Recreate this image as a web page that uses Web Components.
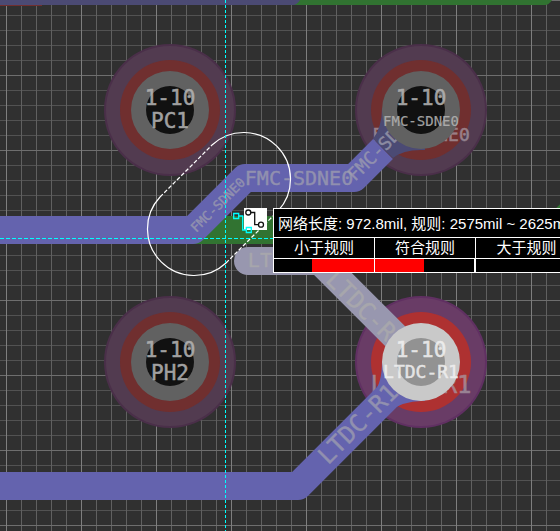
<!DOCTYPE html>
<html lang="zh-CN">
<head>
<meta charset="utf-8">
<title>PCB</title>
<style>
  body {
    margin: 0;
    background: #303030;
  }
</style>
</head>
<body>
<pcb-board>
  <pcb-pad layer="ring" style="--x: 170px; --y: 110px"></pcb-pad>
  <pcb-pad layer="ring" style="--x: 421px; --y: 110px" net="FMC-SDNE0"></pcb-pad>
  <pcb-pad layer="ring" style="--x: 170px; --y: 362px"></pcb-pad>
  <pcb-pad layer="ring" style="--x: 421px; --y: 362px" net="LTDC-R1" active></pcb-pad>
  <pcb-traces></pcb-traces>
  <pcb-pad layer="hole" style="--x: 170px; --y: 110px" number="1-10" name="PC1"></pcb-pad>
  <pcb-pad layer="hole" style="--x: 421px; --y: 110px" number="1-10" name="FMC-SDNE0"></pcb-pad>
  <pcb-pad layer="hole" style="--x: 170px; --y: 362px" number="1-10" name="PH2"></pcb-pad>
  <pcb-pad layer="hole" style="--x: 421px; --y: 362px" number="1-10" name="LTDC-R1" active></pcb-pad>
  <route-cursor></route-cursor>
  <length-tip style="--x: 273px; --y: 208px" low="38" high="50">网络长度: 972.8mil, 规则: 2575mil ~ 2625mil</length-tip>
</pcb-board>

<script>
/**
 * The canvas with its grid. Everything slotted in lies on it.
 */
class PcbBoard extends HTMLElement {
  constructor () {
    super()
    this.attachShadow({ mode: 'open' })
    this.shadowRoot.innerHTML = `
      <style>
        :host {
          display: block;
          position: relative;
          min-height: 100vh;
          overflow: hidden;
          font-family: "DejaVu Sans Mono", monospace;
        }

        .grid {
          position: absolute;
          inset: 0;
          width: 100%;
          height: 100%;
        }
      </style>
      <svg class="grid" aria-hidden="true">
        <defs>
          <pattern id="minor" x="6" y="0" width="15" height="15" patternUnits="userSpaceOnUse">
            <path d="M0 0h15v1H0z" fill="#525252"/>
            <path d="M0 0h1v15H0z" fill="#606060"/>
          </pattern>
          <pattern id="major" x="6" y="0" width="75" height="75" patternUnits="userSpaceOnUse">
            <path d="M0 0h75v1H0z" fill="#6e6e6e"/>
            <path d="M0 0h1v75H0z" fill="#7e7e7e"/>
          </pattern>
        </defs>
        <rect width="100%" height="100%" fill="url(#minor)"/>
        <rect width="100%" height="100%" fill="url(#major)"/>
      </svg>
      <slot></slot>
    `
  }
}
customElements.define('pcb-board', PcbBoard)

/**
 * A round pad. The ring layer lies under the traces, the hole layer over them.
 */
class PcbPad extends HTMLElement {
  constructor () {
    super()
    this.attachShadow({ mode: 'open' })
  }

  /**
   * Draws the layer that the attributes ask for.
   */
  connectedCallback () {
    const ring = this.getAttribute('layer') === 'ring'
    this.shadowRoot.innerHTML = `
      <style>
        :host {
          --edge: #4a2f49;
          --mask: #523b50;
          --copper: #702f2f;
          --plate: #616161;
          --drill: #111;
          --label: #b4b4b4;
          position: absolute;
          left: var(--x);
          top: var(--y);
        }

        :host([active]) {
          --edge: #603062;
          --mask: #693c66;
          --copper: #ae3131;
          --plate: #c9c9c9;
          --drill: #929292;
          --label: #f0f0f0;
        }

        svg {
          display: block;
          width: 132px;
          height: 132px;
          margin: -66px;
          overflow: visible;
        }

        text {
          font-size: 21px;
          text-anchor: middle;
          fill: var(--label);
          stroke: var(--label);
          stroke-width: 0.5;
          opacity: 0.88;
        }

        .small {
          font-size: 14px;
          stroke-width: 0.2;
        }

        .medium {
          font-size: 18px;
        }

        .large {
          font-size: 24px;
        }

        .net {
          fill: #a89aa4;
          stroke: #a89aa4;
          opacity: 0.75;
        }
      </style>
      <svg viewBox="-66 -66 132 132">${ring ? this.ring() : this.hole()}</svg>
    `
  }

  ring () {
    const net = this.getAttribute('net') || ''
    const size = net.length > 7 ? 'medium' : 'large'
    return `
      <circle r="66" fill="var(--edge)"/>
      <circle r="64" fill="var(--mask)"/>
      <circle r="50" fill="var(--copper)"/>
      <text class="net ${size}" y="31">${net}</text>
    `
  }

  hole () {
    const name = this.getAttribute('name')
    const size = name.length > 7 ? 'small' : name.length > 4 ? 'medium' : ''
    return `
      <circle r="39" fill="var(--plate)"/>
      <circle r="24" fill="var(--drill)"/>
      <text y="-5">${this.getAttribute('number')}</text>
      <text class="${size}" y="${size ? 16 : 18}">${name}</text>
    `
  }
}
customElements.define('pcb-pad', PcbPad)

/**
 * Copper traces with their net names.
 */
class PcbTraces extends HTMLElement {
  constructor () {
    super()
    this.attachShadow({ mode: 'open' })
    this.shadowRoot.innerHTML = `
      <style>
        :host {
          position: absolute;
          inset: 0;
        }

        svg {
          display: block;
          width: 100%;
          height: 100%;
        }

        .trace {
          fill: none;
          stroke: #6463ae;
          stroke-width: 28px;
          stroke-linejoin: round;
        }

        .lit {
          stroke: #9897af;
          stroke-linecap: round;
        }

        text {
          font-size: 18px;
          text-anchor: middle;
          dominant-baseline: central;
          fill: #a0a0b0;
          stroke: #a0a0b0;
          stroke-width: 0.4;
          opacity: 0.75;
        }

        .small {
          font-size: 13px;
        }

        .medium {
          font-size: 20px;
        }

        .large {
          font-size: 24px;
        }

        .on-lit {
          fill: #acacac;
          stroke: #acacac;
        }
      </style>
      <svg>
        <path d="M0 0H42V6H0z" fill="#702f2f"/>
        <path d="M290 0H552Q549 5 545 5H290z" fill="#317331"/>
        <path d="M0 0H300Q297 5 293 5H0z" fill="#4b4a74"/>

        <path d="M190 230H554L614 170" fill="none" stroke="#317331" stroke-width="28"/>
        <path d="M373 139Q382 127 382 108L421 110L425 150Q404 149 393 158z" fill="#4b4a74"/>
        <path class="trace" d="M-20 230H193L245 178H354L383 149"/>

        <path class="trace" d="M-20 486H298L398 386"/>
        <path d="M374 392Q382 383 382 361L421 362L425 401Q404 400 388 412z" fill="#6463ae"/>

        <path class="trace lit" d="M248 261H320L421 362"/>

        <text class="small" transform="translate(218 205) rotate(-45)">FMC-SDNE0</text>
        <text class="medium" x="299" y="178">FMC-SDNE0</text>
        <text transform="translate(385 143) rotate(-45)">FMC-SDNE0</text>
        <text class="large" transform="translate(358 424) rotate(-45)">LTDC-R1</text>
        <text class="large on-lit" transform="translate(366 311) rotate(45)">LTDC-R1</text>
        <text class="medium on-lit" x="290" y="260">LTDC-R1</text>
      </svg>
    `
  }
}
customElements.define('pcb-traces', PcbTraces)

/**
 * Crosshair, clearance outline and routing icon.
 */
class RouteCursor extends HTMLElement {
  constructor () {
    super()
    this.attachShadow({ mode: 'open' })
    this.shadowRoot.innerHTML = `
      <style>
        :host {
          position: absolute;
          inset: 0;
        }

        svg {
          display: block;
          width: 100%;
          height: 100%;
        }
      </style>
      <svg fill="none">
        <g stroke="#fff" stroke-width="1.2">
          <path d="M160 197A46.7 46.7 0 0 0 226 263M212 145A46.7 46.7 0 0 1 278 211"/>
          <path d="M160 197L212 145M226 263L278 211" stroke-dasharray="4 2"/>
        </g>
        <g stroke="#0ff" shape-rendering="crispEdges">
          <line x1="0" y1="238.5" x2="100%" y2="238.5" stroke-dasharray="4 2"/>
          <line x1="225.5" y1="0" x2="225.5" y2="100%" stroke-dasharray="3 2"/>
        </g>
        <path d="M244 208h23v22h-23z" fill="#fff"/>
        <g stroke="#111" stroke-width="1.3">
          <circle cx="248.3" cy="212.5" r="2.5"/>
          <circle cx="261" cy="224.7" r="2.5"/>
          <path d="M251 212.5h3.700v12.200h4"/>
        </g>
        <g stroke="#0ff" stroke-width="1.3">
          <path d="M233.700 213.500h5v5h-5zM246.300 227.500h5v5h-5zM238.700 216h4v14h3.600"/>
        </g>
      </svg>
    `
  }
}
customElements.define('route-cursor', RouteCursor)

/**
 * Length tooltip. The attributes low and high give the filled part of
 * the first two gauge cells, in percent.
 */
class LengthTip extends HTMLElement {
  constructor () {
    super()
    this.attachShadow({ mode: 'open' })
  }

  connectedCallback () {
    this.shadowRoot.innerHTML = `
      <style>
        :host {
          position: absolute;
          left: var(--x);
          top: var(--y);
          border: 1px solid #fff;
          background: #000;
          color: #fff;
          font: 15px/20px "Liberation Sans", "Noto Sans CJK SC", sans-serif;
          white-space: nowrap;
        }

        .title {
          padding: 5px 4px 3px;
        }

        table {
          width: 100%;
          min-width: 303px;
          table-layout: fixed;
          border-collapse: separate;
          border-spacing: 0;
        }

        th,
        td {
          padding: 0;
          border-top: 1px solid #fff;
          border-right: 1px solid #fff;
          font-weight: normal;
        }

        th {
          height: 20px;
        }

        td {
          height: 13px;
        }

        td.high {
          border-right-width: 2px;
        }

        th:last-child,
        td:last-child {
          border-right: 0;
        }

        .low {
          background: linear-gradient(to right, transparent ${this.getAttribute('low')}%, #f00 0);
        }

        .high {
          background: linear-gradient(to right, #f00 ${this.getAttribute('high')}%, transparent 0);
        }
      </style>
      <div class="title"><slot></slot></div>
      <table>
        <tr><th>小于规则</th><th>符合规则</th><th>大于规则</th></tr>
        <tr><td class="low"></td><td class="high"></td><td></td></tr>
      </table>
    `
  }
}
customElements.define('length-tip', LengthTip)
</script>
</body>
</html>
